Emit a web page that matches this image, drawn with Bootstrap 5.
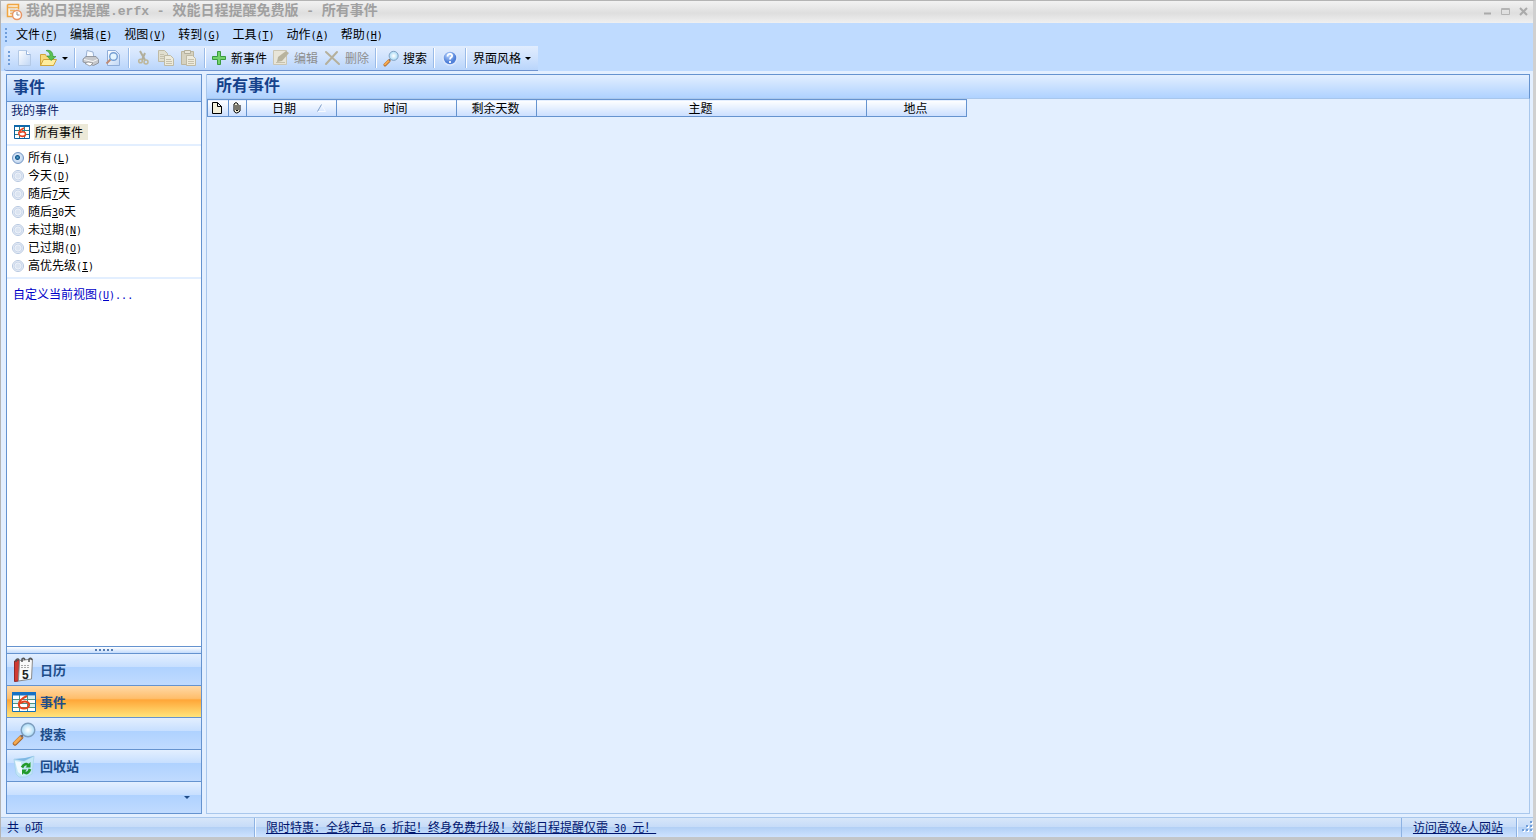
<!DOCTYPE html>
<html lang="zh-CN">
<head>
<meta charset="utf-8">
<meta name="viewport" content="width=device-width, initial-scale=1">
<title>我的日程提醒.erfx - 效能日程提醒免费版 - 所有事件</title>
<link href="https://cdn.jsdelivr.net/npm/bootstrap@5.3.0/dist/css/bootstrap.min.css" rel="stylesheet">
<script src="https://cdn.jsdelivr.net/npm/bootstrap@5.3.0/dist/js/bootstrap.bundle.min.js"></script>
<style>
  :root { --edge: #6593cf; --ink: #15428b; }
  body { font: 12px/18px "Noto Sans CJK SC", sans-serif; color: #000; background: #e3efff; }
  button { border: 0; padding: 0; background: none; color: inherit; white-space: nowrap; }
  svg { display: block; flex: none; }
  .hw { font-family: "DejaVu Sans Mono", monospace; font-size: 10px; }
  .app { border: 1px solid #b4b4b4; border-bottom: 3px solid #c3c6c9; border-right: 3px solid #d0d0d0; }

  .titlebar { height: 22px; padding-left: 5px; background: linear-gradient(#f2f2f2, #e4e4e4 40%, #dedede 55%, #f0f0f0); color: #a0a0a0; }
  .titlebar h1 { font-size: 14px; line-height: 18px; font-weight: 700; margin: 0 0 4px 3px; }
  .titlebar .wide { font-family: "Liberation Mono", monospace; font-size: 13px; white-space: pre; }
  .titlebar button { width: 18px; height: 18px; }

  .bars { background: #bfdbff; }
  .menubar { height: 23px; padding-left: 4px; }
  .menubar button { padding: 0 6px; line-height: 20px; }
  .grip { width: 3px; height: 14px; background: repeating-linear-gradient(#6f9dd9 0 2px, transparent 2px 4px) left / 2px 100% no-repeat; }
  .toolbar { height: 25px; gap: 6px; padding: 0 7px 0 4px; margin-left: 3px; background: linear-gradient(#e1edfe, #cfe2fd 50%, #b9d5fb); border-bottom: 1px solid #6f93cf; border-radius: 3px 0 0 3px; }
  .toolbar .vr-line { width: 2px; height: 20px; background: linear-gradient(90deg, #9abbe8 50%, #fff 50%); }
  .toolbar button { display: flex; align-items: center; height: 24px; }
  .toolbar button:disabled { color: #8d8d8d; }
  .caret { width: 0; height: 0; border: 3px solid transparent; border-top-color: currentColor; border-bottom: 0; }

  .work { padding: 3px 3px 3px 5px; }
  .side { width: 196px; border: 1px solid var(--edge); background: #fff; }
  .pane-title { font-size: 16px; font-weight: 700; color: var(--ink); margin: 0; background: linear-gradient(#e3efff, #afd2ff); }
  .side .pane-title { height: 27px; line-height: 23px; padding-left: 6px; border-bottom: 1px solid var(--edge); }
  .group-title { margin: 0; height: 18px; font-size: 12px; line-height: 16px; font-weight: 400; color: #0a246a; background: #e3efff; padding-left: 4px; }
  .view-row { height: 26px; padding-left: 7px; border-bottom: 2px solid #e3efff; }
  .view-row button { background: #ece9d8; line-height: 16px; height: 16px; padding: 0 5px 0 1px; }
  .filters { padding: 3px 5px 2px; border-bottom: 2px solid #e3efff; }
  .filters label { display: flex; align-items: center; gap: 4px; height: 18px; white-space: pre; }
  .filters input { appearance: none; width: 12px; height: 12px; margin: 0; border: 1px solid #b4c6e0; border-radius: 50%; background: radial-gradient(#dbe4f1 0 2px, #edf2f9 3px, #c2d1e8 4px, #fff 5px); }
  .filters input:checked { border-color: #7597c4; background: radial-gradient(circle at 45% 45%, #5ba8d0 0, #15568c 2px, #d7e6f7 3px, #c5d8ef 5px); }
  .custom { color: #0000c8; padding: 6px; }
  .splitter { height: 7px; border-top: 1px solid var(--edge); background: linear-gradient(#fff, #c4dcfc); }
  .splitter i { width: 18px; height: 2px; background: repeating-linear-gradient(90deg, #567db1 0 2px, transparent 2px 4px); }
  .nav-btn { height: 32px; border-top: 1px solid var(--edge); background: linear-gradient(#e3efff, #c7dfff 42%, #afd2ff 43%, #c0dbff); font-size: 13px; font-weight: 700; color: #204d89; padding: 0 11px 0 5px; gap: 4px; text-align: left; }
  .nav-btn.current { background: linear-gradient(#ffd9a7, #ffbe6b 40%, #ffa638 45%, #ffe47b); }

  .main { border: 1px solid #a9c7ec; background: #e3efff; }
  .main .pane-title { height: 25px; line-height: 19px; padding-left: 9px; margin: -1px -1px 0 0; border-top: 1px solid var(--edge); border-right: 1px solid var(--edge); border-bottom: 1px solid #a9c7ec; }
  .events { width: 760px; table-layout: fixed; border-collapse: collapse; }
  .events th { height: 17px; line-height: 15px; padding: 0 2px 1px 0; font-weight: 400; text-align: center; border: 1px solid var(--edge); background: linear-gradient(#fff, #c9deff); }
  .events svg { margin: auto; }

  .status { height: 20px; border-top: 1px solid #a9c7ec; color: #00156e; background: linear-gradient(#d7e6f9, #c7dcf8 45%, #b3d0f5 50%, #cde2ff); line-height: 17px; }
  .status a { color: #00156e; white-space: pre; }
  .status > div { border-right: 1px solid #8db2e3; box-shadow: 1px 0 #f0f7ff; }
  .status .count { width: 248px; margin-left: 6px; }
  .status .offer { margin-left: 11px; }
  .status .site { padding: 0 13px 0 11px; border-left: 1px solid #8db2e3; }
</style>
</head>
<body>
<svg width="0" height="0" class="position-absolute" aria-hidden="true">
  <defs>
    <linearGradient id="paper" x1="0" y1="0" x2="1" y2="1"><stop stop-color="#fff"/><stop offset="1" stop-color="#bfd6f5"/></linearGradient>
    <radialGradient id="glass"><stop stop-color="#fff"/><stop offset="1" stop-color="#a7daf6"/></radialGradient>
    <radialGradient id="ball" cx=".4" cy=".3"><stop stop-color="#b9d5ff"/><stop offset="1" stop-color="#5080d8"/></radialGradient>
    <symbol id="grid-event" viewBox="0 0 24 20">
      <path d="M.5.5h23v19H.5z" fill="#fff" stroke="#0f6fb8"/><path d="M0 0h24v3.500H0z" fill="#1671c4"/>
      <path d="M16 4h7v4h-7zM1 8h6v3H1zM16 12h7v3h-7z" fill="#d5f0ee"/>
      <path d="M1 7.500h22M1 11.500h22M1 15.500h22M7.500 3v16M15.500 3v16" stroke="#4e9485"/>
      <path d="M15 4C10 6 6 10 7 13.500c1 4 9 4 10 0 .8-4-5-5.500-9-2" fill="none" stroke="#e5441e" stroke-width="2"/>
    </symbol>
    <symbol id="grid-small" viewBox="0 0 16 14">
      <path d="M.5.5h15v13H.5z" fill="#fff" stroke="#0b5f9e"/><path d="M0 0h16v2H0z" fill="#0f68ab"/>
      <path d="M1 5.500h14M1 9.500h14M5.500 2v11M10.500 2v11" stroke="#2c7f86"/>
      <path d="M10 3C6 5 4 7 5 9.500c1 2.500 6 2.500 6.500 0 .4-2.500-2.500-3.500-5.500-2" fill="#fff" stroke="#e5441e" stroke-width="1.600"/>
    </symbol>
    <symbol id="magnifier" viewBox="0 0 24 24">
      <path d="M3 21.500l6-6" stroke="#a8662c" stroke-width="4.500" stroke-linecap="round"/><path d="M3 21l6-6" stroke="#f5a94f" stroke-width="3" stroke-linecap="round"/><path d="M9 15l2-2" stroke="#667" stroke-width="2"/>
      <circle cx="16" cy="8" r="6.800" fill="url(#glass)" stroke="#7d9dbd" stroke-width="1.400"/>
    </symbol>
  </defs>
</svg>

<div class="app d-flex flex-column vh-100">
  <header class="titlebar d-flex align-items-center">
    <svg width="17" height="18" viewBox="0 0 17 18"><path d="M1.500 1.500h11v5M1.500 1.500v12h5" fill="#fff5e2" stroke="#f0a541" stroke-width="1.500"/><path d="M2 4.500h10M4 7.500h5M4 10.500h3" fill="none" stroke="#f2b45e" stroke-width="1.500"/><circle cx="11" cy="12" r="4.500" fill="#fff" stroke="#e89565" stroke-width="1.500"/><path d="M11 9v3h2.500" fill="none" stroke="#8d8d8d"/></svg>
    <h1 class="flex-grow-1 text-nowrap overflow-hidden">我的日程提醒<span class="wide">.erfx - </span>效能日程提醒免费版<span class="wide"> - </span>所有事件</h1>
    <button aria-label="最小化"><svg width="18" height="18"><path d="M5 10.500h7" stroke="#aaa" stroke-width="2"/></svg></button>
    <button aria-label="最大化"><svg width="18" height="18"><path d="M4.500 5.500h8v6h-8zM4 6.500h9" fill="none" stroke="#b4b4b4"/></svg></button>
    <button aria-label="关闭"><svg width="18" height="18"><path d="M5 5l7 7M12 5l-7 7" stroke="#aaa" stroke-width="2"/></svg></button>
  </header>

  <div class="bars">
    <nav class="menubar d-flex align-items-center" aria-label="菜单">
      <span class="grip"></span><div class="d-flex ps-0">
      <button class="ps-1 ms-1">文件<span class="hw">(<u>F</u>)</span></button><button>编辑<span class="hw">(<u>E</u>)</span></button><button>视图<span class="hw">(<u>V</u>)</span></button><button>转到<span class="hw">(<u>G</u>)</span></button><button>工具<span class="hw">(<u>T</u>)</span></button><button>动作<span class="hw">(<u>A</u>)</span></button><button>帮助<span class="hw">(<u>H</u>)</span></button></div>
    </nav>
    <div class="d-flex">
      <div class="toolbar d-flex align-items-center" role="toolbar" aria-label="工具栏">
        <span class="grip"></span>
        <button aria-label="新建"><svg width="16" height="18" viewBox="0 0 16 18"><path d="M1.500 1.500h8l4 4v11h-12z" fill="url(#paper)" stroke="#b3c9e6"/><path d="M9.500 1.500v4h4" fill="#fff" stroke="#9bb6dc"/></svg></button>
        <button aria-label="打开" class="gap-1"><svg width="19" height="18" viewBox="0 0 19 18"><path d="M1.500 5.500h5l1 2h7v9h-13z" fill="#f8d97a" stroke="#d0a53c"/><path d="M1.500 16.500l3-6h13l-3 6z" fill="#ffee9f" stroke="#d0a53c"/><path d="M7 1.500c5-1 7 2 7 6h3l-5 4-4-4.500h3c0-3-1-4-4-5.500z" fill="#5cc152" stroke="#319238" stroke-width=".6"/></svg><span class="caret"></span></button>
        <span class="vr-line"></span>
        <button aria-label="打印"><svg width="17" height="18" viewBox="0 0 17 18"><path d="M4 9l1-7.500 6 1.500 1 6z" fill="#f6faff" stroke="#9ab1d3"/><path d="M1 10l3-2.500h10l2.500 3v3.500l-5 2.500L1 13z" fill="#c6c8cc" stroke="#858990" stroke-width=".8"/><path d="M2 10.500l9 2 4.500-2" stroke="#f7f7f7" fill="none"/><path d="M3 14.500l3-1.500 5 1-3 3z" fill="#fff" stroke="#777" stroke-width=".6"/></svg></button>
        <button aria-label="打印预览"><svg width="17" height="18" viewBox="0 0 17 18"><path d="M2.500 1.500h8l4 4v11h-12z" fill="url(#paper)" stroke="#8fadd9"/><path d="M1.500 14.500l4-4" stroke="#bd8b76" stroke-width="2"/><circle cx="8.500" cy="7.500" r="3.800" fill="#e4f5ff" stroke="#769fd3" stroke-width="1.400"/></svg></button>
        <span class="vr-line"></span>
        <button aria-label="剪切" disabled><svg width="16" height="18" viewBox="0 0 16 18"><path d="M4 2l5 9M9 4L6 11" stroke="#b1ae9c" stroke-width="2"/><circle cx="4.500" cy="12" r="1.800" fill="none" stroke="#bdb69a" stroke-width="1.500"/><circle cx="10" cy="13" r="2" fill="none" stroke="#bdb69a" stroke-width="1.500"/></svg></button>
        <button aria-label="复制" disabled><svg width="17" height="18" viewBox="0 0 17 18"><path d="M.5 1.500h6l3 3v8h-9z" fill="#e1dfcf" stroke="#bfbaa5"/><path d="M6.500 6.500h6l3 3v7h-9z" fill="#eeebdb" stroke="#bfbaa5"/><path d="M8 10.500h5M8 12.500h6M8 14.500h6M2 5.500h4M2 7.500h4M2 9.500h4" stroke="#c6c1ad"/></svg></button>
        <button aria-label="粘贴" disabled><svg width="17" height="18" viewBox="0 0 17 18"><path d="M.5 2.500h12v13H.5z" fill="#d6d2c0" stroke="#bbb59e"/><path d="M3.500 1.500h6v3h-6z" fill="#e8e5d8" stroke="#b3af9c"/><path d="M5.500 6.500h6l3 3v7h-9z" fill="#eeebdd" stroke="#bfbaa5"/><path d="M7 10.500h6M7 12.500h6M7 14.500h6" stroke="#c6c1ad"/></svg></button>
        <span class="vr-line"></span>
        <button class="gap-1 ms-n1"><svg width="15" height="16" viewBox="0 0 15 16"><path d="M5.500 1.500h3v5h5v3h-5v5h-3v-5h-5v-3h5z" fill="#73d26a" stroke="#3a9b40"/></svg>新事件</button>
        <button class="gap-1" disabled><svg width="17" height="18" viewBox="0 0 17 18"><path d="M.5 1.500h13v14H.500z" fill="#e8e5d8" stroke="#cbc6b4"/><path d="M4 13l1-5 8-6 3 2-7 8z" fill="#b8b39d"/><path d="M3 13.500h9" stroke="#c5c0ac"/></svg>编辑</button>
        <button class="gap-1" disabled><svg width="17" height="18" viewBox="0 0 17 18"><path d="M2 3l13 12M13 3L2 15" stroke="#b5b09c" stroke-width="2" stroke-linecap="round"/></svg>删除</button>
        <span class="vr-line"></span>
        <button class="gap-1"><svg width="16" height="17"><use href="#magnifier"/></svg>搜索</button>
        <span class="vr-line"></span>
        <button aria-label="帮助"><svg width="18" height="16" viewBox="-1 0 18 16"><circle cx="8" cy="8" r="7" fill="url(#ball)" stroke="#dce8fc" stroke-width="1.500"/><path d="M5.500 6.500c0-4 5.500-3 4.500 0-.5 1-2 1-2 3M8 11v2" fill="none" stroke="#fff" stroke-width="1.800"/></svg></button>
        <span class="vr-line"></span>
        <button class="gap-1">界面风格<span class="caret"></span></button>
      </div>
    </div>
  </div>

  <div class="work d-flex flex-grow-1 gap-1">
    <aside class="side d-flex flex-column flex-shrink-0">
      <h2 class="pane-title">事件</h2>
      <h3 class="group-title">我的事件</h3>
      <div class="view-row d-flex align-items-center gap-1"><svg width="16" height="14"><use href="#grid-small"/></svg><button>所有事件</button></div>
      <div class="filters">
        <label><input type="radio" name="f" checked><span>所有<span class="hw">(<u>L</u>)</span></span></label>
        <label><input type="radio" name="f"><span>今天<span class="hw">(<u>D</u>)</span></span></label>
        <label><input type="radio" name="f"><span>随后<span class="hw"><u>7</u></span>天</span></label>
        <label><input type="radio" name="f"><span>随后<span class="hw"><u>3</u>0</span>天</span></label>
        <label><input type="radio" name="f"><span>未过期<span class="hw">(<u>N</u>)</span></span></label>
        <label><input type="radio" name="f"><span>已过期<span class="hw">(<u>O</u>)</span></span></label>
        <label><input type="radio" name="f"><span>高优先级<span class="hw">(<u>I</u>)</span></span></label>
      </div>
      <a href="#" class="custom text-decoration-none">自定义当前视图<span class="hw">(<u>U</u>)...</span></a>
      <div class="splitter mt-auto d-flex align-items-center justify-content-center"><i></i></div>
      <button class="nav-btn d-flex align-items-center"><svg width="24" height="26" viewBox="0 0 24 26"><path d="M2.500 4l5-1-1 21-4 .5z" fill="#d03a33" stroke="#8e2a2a"/><path d="M7.500 3.500l13-1.500-1 20-13 2z" fill="#fafafa" stroke="#8a8a8a"/><path d="M10 5V2q2-2 3 1M17 5V2q2-2 3 1M4 5V3q2-2 3 0" fill="none" stroke="#555" stroke-width="1.500"/><path d="M9 8.500h9M9 10.500h8" stroke="#aaa" stroke-dasharray="2 1"/><text x="10" y="22" font-family="Liberation Sans" font-size="12" font-weight="700" fill="#222">5</text></svg>日历</button>
      <button class="nav-btn current d-flex align-items-center"><svg width="24" height="20"><use href="#grid-event"/></svg>事件</button>
      <button class="nav-btn d-flex align-items-center"><svg width="24" height="24"><use href="#magnifier"/></svg>搜索</button>
      <button class="nav-btn d-flex align-items-center"><svg width="24" height="24" viewBox="0 0 24 24"><path d="M2 5l10 2 10-5-2 18-6 3H7l-3-3z" fill="#c3e6f8" stroke="#a6d3ea" stroke-width=".8"/><path d="M2 5l10 2 10-5-5 1-4 1z" fill="#7fb8e4"/><path d="M3 7l3 11 5 4-2-14z" fill="#f0faff"/><path d="M10 13.500q3-5.500 7-2M18 15q-2 6-6 3" fill="none" stroke="#239a2a" stroke-width="2.800"/><path d="M18.500 8v5.500h-5zM10 21v-5.500h5z" fill="#239a2a"/></svg>回收站</button>
      <button class="nav-btn d-flex align-items-center justify-content-end" aria-label="配置按钮"><span class="caret"></span></button>
    </aside>

    <main class="main flex-grow-1">
      <h2 class="pane-title">所有事件</h2>
      <table class="events">
        <colgroup><col style="width:21px"><col style="width:18px"><col style="width:90px"><col style="width:120px"><col style="width:80px"><col style="width:330px"><col style="width:100px"></colgroup>
        <thead><tr>
          <th aria-label="类型"><svg width="10" height="12"><path d="M.5.5h5l4 4v7H.5zM5.500.5v4h4" fill="#f3efd9" stroke="#000"/></svg></th>
          <th aria-label="附件"><svg width="8" height="12"><path d="M3 3v5q1 2 2 0V2Q3-1 1 2v7q2 4 6 0V3" fill="#f3efd9" stroke="#000"/></svg></th>
          <th><div class="d-flex align-items-center"><span class="flex-grow-1 ps-2">日期</span><svg class="ms-1 me-2" width="9" height="8"><path d="M4.500.5l4 7h-8" fill="none" stroke="#f5f9ff"/><path d="M.5 7.500L4.500.5" stroke="#7f9dc6"/></svg></div></th>
          <th>时间</th><th>剩余天数</th><th>主题</th><th>地点</th>
        </tr></thead>
      </table>
    </main>
  </div>

  <footer class="status d-flex">
    <div class="count">共<span class="hw">&nbsp;0</span>项</div>
    <a href="#" class="offer flex-grow-1 overflow-hidden">限时特惠：全线产品<span class="hw"> 6 </span>折起！终身免费升级！效能日程提醒仅需<span class="hw"> 30 </span>元！</a>
    <div class="site"><a href="#">访问高效<span class="hw">e</span>人网站</a></div>
    <svg class="ms-1" width="12" height="18"><path d="M11 4v2M11 8v2M7 8v2M11 12v2M7 12v2M3 12v2" stroke="#fff" stroke-width="2"/><path d="M10 3v2M10 7v2M6 7v2M10 11v2M6 11v2M2 11v2" stroke="#6f9dd9" stroke-width="2"/></svg>
  </footer>
</div>
</body>
</html>
